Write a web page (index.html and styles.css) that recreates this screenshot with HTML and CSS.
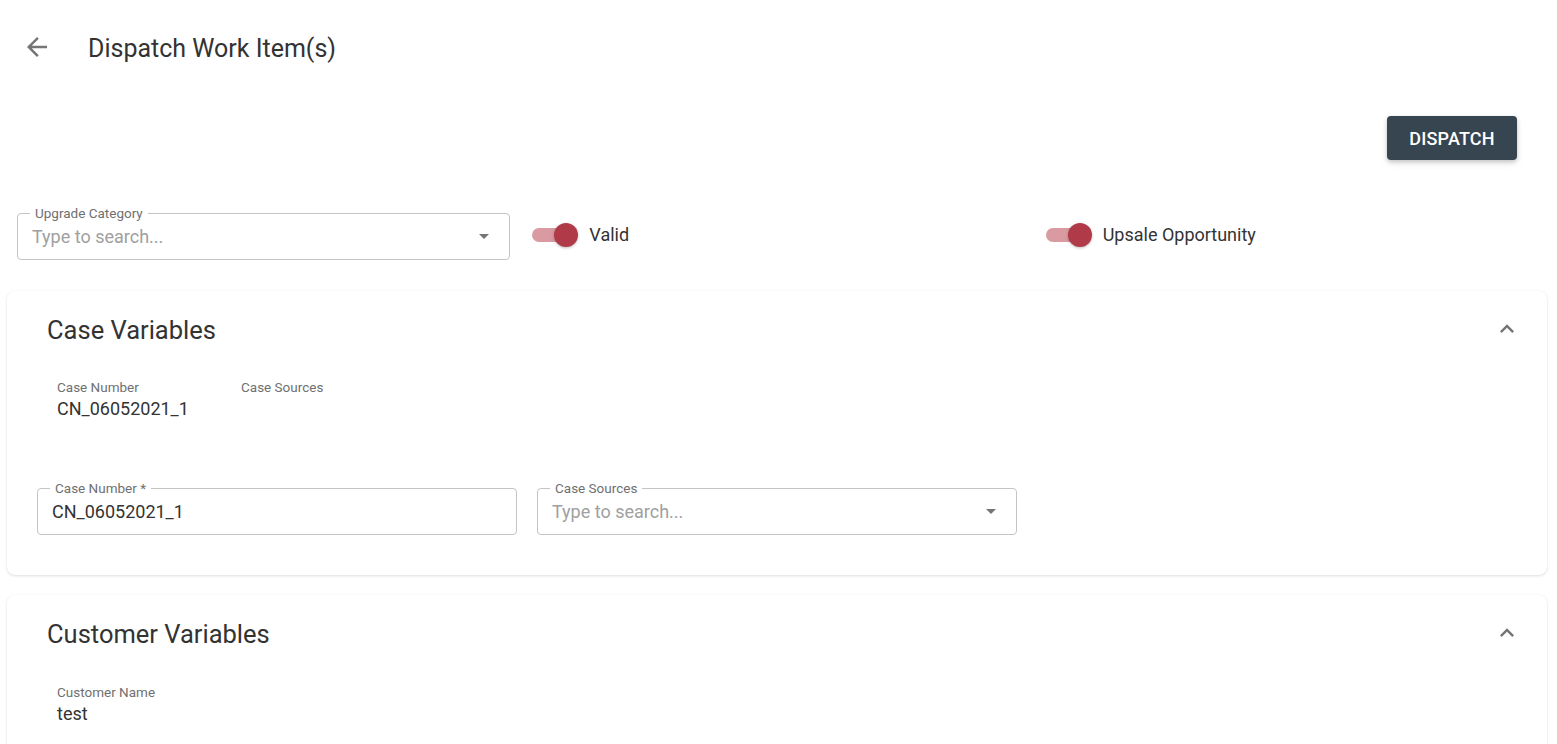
FILE: index.html
```html
<!DOCTYPE html>
<html lang="en">
<head>
<meta charset="utf-8">
<title>Dispatch Work Item(s)</title>
<link rel="stylesheet" href="styles.css">
</head>
<body>
<div class="page">
  <header class="topbar">
    <button class="icon-btn back" aria-label="Back">
      <svg width="30" height="30" viewBox="0 0 24 24"><path d="M20 11H7.83l5.59-5.59L12 4l-8 8 8 8 1.41-1.41L7.83 13H20v-2z" fill="#757575"/></svg>
    </button>
    <h1 class="title">Dispatch Work Item(s)</h1>
  </header>

  <div class="actions">
    <button class="btn-primary">DISPATCH</button>
  </div>

  <div class="filters">
    <div class="cell">
      <fieldset class="field">
        <legend>Upgrade Category</legend>
        <div class="field-row">
          <span class="placeholder">Type to search...</span>
          <span class="caret"></span>
        </div>
      </fieldset>
    </div>
    <div class="cell">
      <label class="switch"><span class="track"><span class="thumb"></span></span><span class="switch-label">Valid</span></label>
    </div>
    <div class="cell">
      <label class="switch"><span class="track"><span class="thumb"></span></span><span class="switch-label">Upsale Opportunity</span></label>
    </div>
  </div>

  <section class="card">
    <div class="card-head">
      <h2 class="card-title">Case Variables</h2>
      <svg class="chev" width="28" height="28" viewBox="0 0 24 24"><path d="M7.41 15.41L12 10.83l4.59 4.58L18 14l-6-6-6 6z" fill="#757575"/></svg>
    </div>
    <div class="readonly">
      <div class="ro-item"><div class="ro-label">Case Number</div><div class="ro-value">CN_06052021_1</div></div>
      <div class="ro-item"><div class="ro-label">Case Sources</div><div class="ro-value"></div></div>
    </div>
    <div class="inputs">
      <fieldset class="field">
        <legend>Case Number *</legend>
        <div class="field-row"><span class="value">CN_06052021_1</span></div>
      </fieldset>
      <fieldset class="field">
        <legend>Case Sources</legend>
        <div class="field-row">
          <span class="placeholder">Type to search...</span>
          <span class="caret"></span>
        </div>
      </fieldset>
    </div>
  </section>

  <section class="card">
    <div class="card-head">
      <h2 class="card-title">Customer Variables</h2>
      <svg class="chev" width="28" height="28" viewBox="0 0 24 24"><path d="M7.41 15.41L12 10.83l4.59 4.58L18 14l-6-6-6 6z" fill="#757575"/></svg>
    </div>
    <div class="readonly">
      <div class="ro-item"><div class="ro-label">Customer Name</div><div class="ro-value">test</div></div>
    </div>
  </section>
</div>
</body>
</html>
```

FILE: styles.css
```css
* { box-sizing: border-box; }
html, body { margin: 0; padding: 0; background: #fff; }
body {
  font-family: Roboto, "Liberation Sans", Arial, sans-serif;
  color: #333;
  overflow: hidden;
}
.page { padding: 0 10px 0 7px; }

.topbar {
  height: 96px;
  display: flex;
  align-items: center;
  padding-left: 15px;
}
.icon-btn {
  background: none;
  border: 0;
  padding: 0;
  width: 30px;
  height: 30px;
  display: flex;
  cursor: pointer;
  margin-top: -2px;
}
.title {
  margin: 0 0 0 36px;
  font-size: 25px;
  font-weight: 400;
  color: #333;
}

.actions {
  display: flex;
  justify-content: flex-end;
  padding: 20px 30px 0 0;
}
.btn-primary {
  width: 130px;
  height: 44px;
  background: #36454f;
  color: #fff;
  border: 0;
  border-radius: 4px;
  font-family: inherit;
  font-size: 18px;
  font-weight: 500;
  letter-spacing: 0.2px;
  box-shadow: 0 2px 4px rgba(0,0,0,0.18), 0 3px 8px rgba(0,0,0,0.08);
}

.filters {
  display: grid;
  grid-template-columns: repeat(3, 1fr);
  margin-top: 46px;
  align-items: center;
}
.cell { padding: 0 10px; }
.filters .cell:nth-child(2), .filters .cell:nth-child(3) { padding-left: 12px; padding-top: 3px; }

.field {
  margin: 0;
  border: 1px solid #c4c4c4;
  border-radius: 4px;
  padding: 0 14px 0 14px;
  height: 54px;
  min-width: 0;
}
.field legend {
  font-size: 13.5px;
  color: #707070;
  padding: 0 5px;
  margin-left: -2px;
  line-height: 14px;
}
.field-row {
  display: flex;
  align-items: center;
  height: 37px;
  margin-top: -2px;
}
.placeholder { font-size: 18px; color: #a0a0a0; flex: 1; }
.value { font-size: 18px; color: #333; flex: 1; }
.caret {
  width: 0; height: 0;
  border-left: 5px solid transparent;
  border-right: 5px solid transparent;
  border-top: 5px solid #757575;
  margin-right: 6px;
}

.switch { display: flex; align-items: center; }
.track {
  width: 34px;
  height: 14px;
  border-radius: 7px;
  background: #d99ba1;
  display: flex;
  align-items: center;
  justify-content: flex-end;
}
.thumb {
  width: 24px;
  height: 24px;
  border-radius: 50%;
  background: #b03a48;
  margin-right: -12px;
  box-shadow: 0 1px 3px rgba(0,0,0,0.25);
}
.switch-label { margin-left: 23px; font-size: 18px; color: #333; }

.card {
  background: #fff;
  border-radius: 8px;
  box-shadow: 0 1px 3px rgba(0,0,0,0.13), 0 0 1px rgba(0,0,0,0.06);
  margin-top: 31px;
  padding: 23px 30px 40px 30px;
}
.card + .card { margin-top: 20px; }
.card-head {
  display: flex;
  align-items: center;
  justify-content: space-between;
  padding-left: 10px;
  height: 32px;
}
.card-title { margin: 0; font-size: 25.5px; font-weight: 400; color: #333; }
.chev { margin-right: -4px; margin-top: -2px; }

.readonly {
  display: flex;
  gap: 20px;
  padding-left: 20px;
  margin-top: 33px;
}
.card + .card .readonly { margin-top: 34px; }
.ro-item { min-width: 164px; }
.ro-label { font-size: 13.5px; line-height: 16px; color: #707070; }
.ro-value { font-size: 18px; line-height: 24px; color: #333; margin-top: 2px; }

.inputs {
  display: grid;
  grid-template-columns: repeat(3, 1fr);
  gap: 20px;
  margin-top: 60px;
}
```
